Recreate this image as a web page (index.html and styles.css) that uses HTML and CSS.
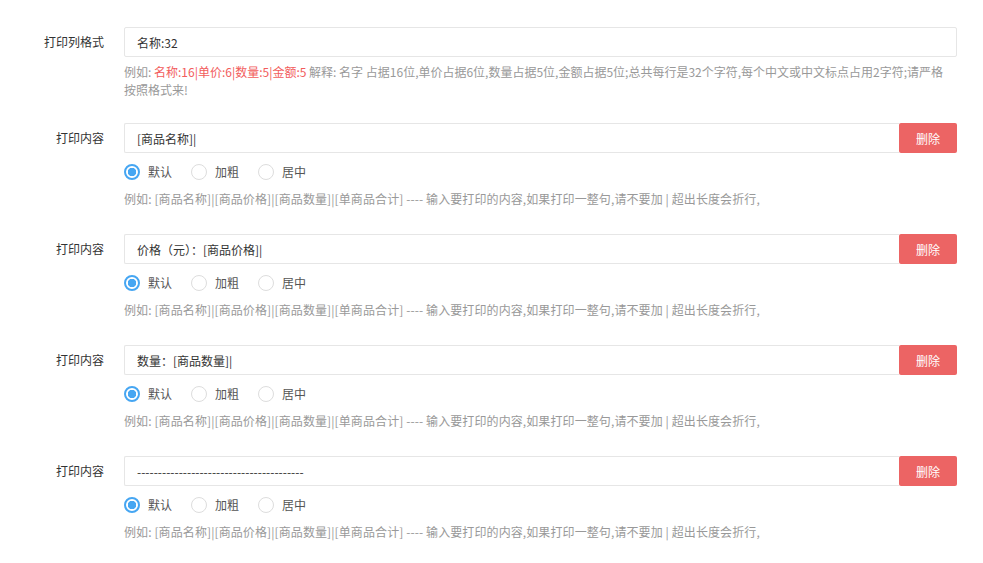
FILE: index.html
```html
<!DOCTYPE html>
<html lang="zh-CN">
<head>
    <meta charset="UTF-8">
    <title>打印设置</title>
    <link rel="stylesheet" href="styles.css">
</head>
<body>
    <form class="print-form">
        <div class="form-item first">
            <label class="form-label">打印列格式</label>
            <div class="form-block">
                <input type="text" class="form-input" value="名称:32">
                <div class="form-tip wide">例如: <span class="red">名称:16|单价:6|数量:5|金额:5</span> 解释: 名字 占据16位,单价占据6位,数量占据5位,金额占据5位;总共每行是32个字符,每个中文或中文标点占用2字符;请严格按照格式来!</div>
            </div>
        </div>

        <div class="form-item">
            <label class="form-label">打印内容</label>
            <div class="form-block">
                <div class="input-group">
                    <input type="text" class="form-input" value="[商品名称]|">
                    <button type="button" class="btn-delete">删除</button>
                </div>
                <div class="radio-row">
                    <label class="radio"><input type="radio" name="style1" checked><span>默认</span></label>
                    <label class="radio"><input type="radio" name="style1"><span>加粗</span></label>
                    <label class="radio"><input type="radio" name="style1"><span>居中</span></label>
                </div>
                <div class="form-tip">例如: [商品名称]|[商品价格]|[商品数量]|[单商品合计] ---- 输入要打印的内容,如果打印一整句,请不要加 | 超出长度会折行,</div>
            </div>
        </div>

        <div class="form-item">
            <label class="form-label">打印内容</label>
            <div class="form-block">
                <div class="input-group">
                    <input type="text" class="form-input" value="价格（元）：[商品价格]|">
                    <button type="button" class="btn-delete">删除</button>
                </div>
                <div class="radio-row">
                    <label class="radio"><input type="radio" name="style2" checked><span>默认</span></label>
                    <label class="radio"><input type="radio" name="style2"><span>加粗</span></label>
                    <label class="radio"><input type="radio" name="style2"><span>居中</span></label>
                </div>
                <div class="form-tip">例如: [商品名称]|[商品价格]|[商品数量]|[单商品合计] ---- 输入要打印的内容,如果打印一整句,请不要加 | 超出长度会折行,</div>
            </div>
        </div>

        <div class="form-item">
            <label class="form-label">打印内容</label>
            <div class="form-block">
                <div class="input-group">
                    <input type="text" class="form-input" value="数量：[商品数量]|">
                    <button type="button" class="btn-delete">删除</button>
                </div>
                <div class="radio-row">
                    <label class="radio"><input type="radio" name="style3" checked><span>默认</span></label>
                    <label class="radio"><input type="radio" name="style3"><span>加粗</span></label>
                    <label class="radio"><input type="radio" name="style3"><span>居中</span></label>
                </div>
                <div class="form-tip">例如: [商品名称]|[商品价格]|[商品数量]|[单商品合计] ---- 输入要打印的内容,如果打印一整句,请不要加 | 超出长度会折行,</div>
            </div>
        </div>

        <div class="form-item">
            <label class="form-label">打印内容</label>
            <div class="form-block">
                <div class="input-group">
                    <input type="text" class="form-input" value="----------------------------------------">
                    <button type="button" class="btn-delete">删除</button>
                </div>
                <div class="radio-row">
                    <label class="radio"><input type="radio" name="style4" checked><span>默认</span></label>
                    <label class="radio"><input type="radio" name="style4"><span>加粗</span></label>
                    <label class="radio"><input type="radio" name="style4"><span>居中</span></label>
                </div>
                <div class="form-tip">例如: [商品名称]|[商品价格]|[商品数量]|[单商品合计] ---- 输入要打印的内容,如果打印一整句,请不要加 | 超出长度会折行,</div>
            </div>
        </div>
    </form>
</body>
</html>
```

FILE: styles.css
```css
body {
    margin: 0;
    background: #fff;
    font-family: "Noto Sans CJK SC", "Noto Sans", sans-serif;
    font-size: 12px;
    color: #333;
}
.print-form {
    padding: 27px 26px 0 0;
}
.form-item {
    display: flex;
    margin-bottom: 26px;
}
.form-item.first {
    margin-bottom: 24px;
}
.form-label {
    width: 104px;
    height: 30px;
    line-height: 30px;
    text-align: right;
    margin-right: 20px;
    color: #333;
}
.form-block {
    flex: 1;
    min-width: 0;
}
.form-input {
    display: block;
    width: 100%;
    height: 30px;
    box-sizing: border-box;
    border: 1px solid #e6e6e6;
    border-radius: 2px;
    padding: 0 12px;
    font-family: inherit;
    font-size: 12px;
    color: #333;
    outline: none;
}
.input-group {
    display: flex;
}
.input-group .form-input {
    flex: 1;
    border-right: none;
    border-radius: 2px 0 0 2px;
}
.btn-delete {
    width: 58px;
    height: 30px;
    border: none;
    border-radius: 2px;
    background: #ec6464;
    color: #fff;
    font-family: inherit;
    font-size: 12px;
    cursor: pointer;
}
.form-tip {
    margin-top: 6px;
    line-height: 18px;
    color: #999;
    letter-spacing: 0.1px;
}
.form-tip.wide {
    padding-right: 10px;
    letter-spacing: 0;
}
.radio-row + .form-tip {
    margin-top: 10px;
}
.form-tip .red {
    color: #f25c5c;
}
.radio-row {
    display: flex;
    margin-top: 10px;
    height: 17px;
    align-items: center;
}
.radio {
    display: flex;
    align-items: center;
    margin-right: 19px;
    color: #555;
    cursor: pointer;
}
.radio input {
    appearance: none;
    -webkit-appearance: none;
    width: 16px;
    height: 16px;
    margin: 0 8px 0 0;
    box-sizing: border-box;
    border: 1px solid #ddd;
    border-radius: 50%;
    background: #fff;
}
.radio input:checked {
    border: 2px solid #46a6f2;
    background: radial-gradient(circle, #46a6f2 0 4px, #fff 4.5px);
}
```
